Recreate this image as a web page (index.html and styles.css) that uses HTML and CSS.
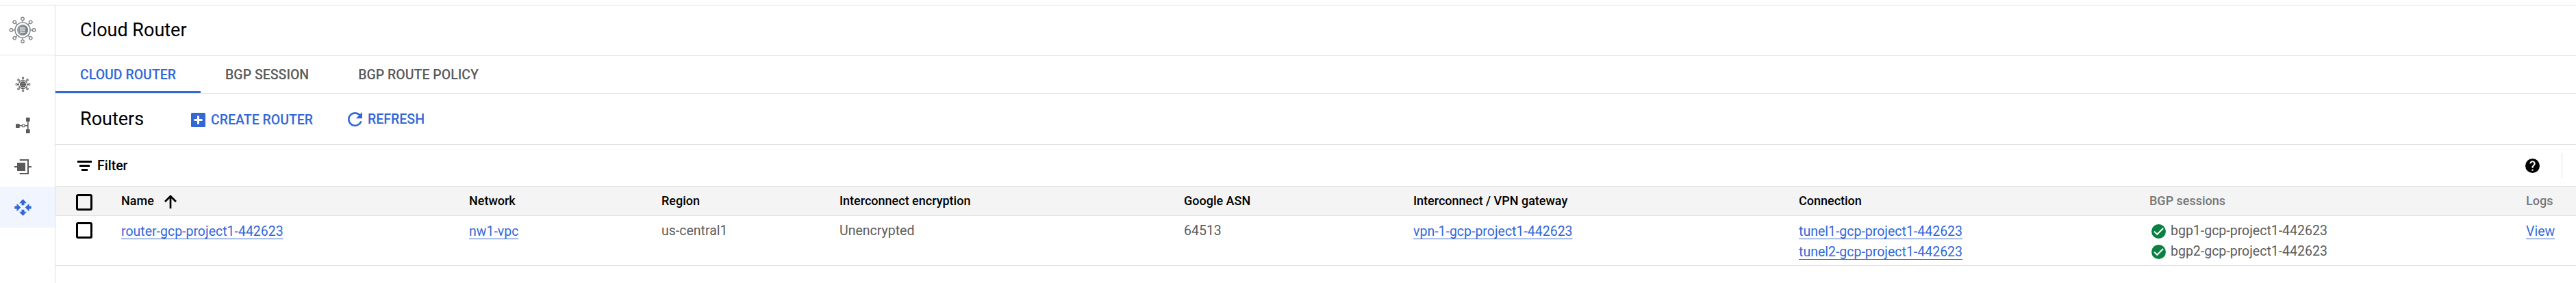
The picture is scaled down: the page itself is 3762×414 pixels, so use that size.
FILE: index.html
```html
<!DOCTYPE html>
<html lang="en">
<head>
<meta charset="utf-8">
<title>Cloud Router</title>
<link rel="stylesheet" href="styles.css">
</head>
<body>
<svg width="0" height="0" class="defs">
  <defs>
    <linearGradient id="disc" x1="0" y1="0" x2="1" y2="0"><stop offset="0" stop-color="#9aa0a6"/><stop offset="1" stop-color="#73797f"/></linearGradient>
    <g id="spoke"><path d="M0-11v-3" /><circle cx="0" cy="-16.600" r="2.200"/></g>
    <g id="hub">
      <circle r="11.100"/>
      <use href="#spoke"/><use href="#spoke" transform="rotate(45)"/><use href="#spoke" transform="rotate(90)"/><use href="#spoke" transform="rotate(135)"/>
      <use href="#spoke" transform="rotate(180)"/><use href="#spoke" transform="rotate(225)"/><use href="#spoke" transform="rotate(270)"/><use href="#spoke" transform="rotate(315)"/>
    </g>
  </defs>
</svg>
<div class="app">
  <nav class="rail">
    <div class="rail-top">
      <svg width="40" height="40" viewBox="-20 -20 40 40" fill="none">
        <use href="#hub" stroke="#80868b" stroke-width="1.400"/>
        <circle r="8" fill="url(#disc)"/>
        <path d="M-4-3h8M-4 0h8M-4 3.200h8" stroke="#e4e6e8" stroke-width="1.300"/>
      </svg>
    </div>
    <div class="rail-item">
      <svg class="odd" width="25" height="25" viewBox="-22.500 -22.500 45 45" fill="none">
        <use href="#hub" stroke="#5a5a5a" stroke-width="1.900"/>
        <circle r="8" fill="#5a5a5a"/>
        <path d="M-5-3h10M-5 2.500h10" stroke="#b5b5b5" stroke-width="1.400"/>
      </svg>
    </div>
    <div class="rail-item">
      <svg width="25" height="24" viewBox="0 0 25 24" fill="#5a5a5a">
        <path d="M2 9.300h5.700V15H2zM17 0h5.700v5.700H17zM17 17.300h5.700V23H17zM19 5h1.600v13H19zM7 11h4v1.400H7zM15 11h5v1.400h-5z"/>
        <circle cx="13.300" cy="11.700" r="2" fill="#fff" stroke="#5a5a5a" stroke-width="1.100"/>
      </svg>
    </div>
    <div class="rail-item">
      <svg width="25" height="24" viewBox="0 0 25 24" fill="#5a5a5a">
        <path d="M4 6h12v12H4zM0 11h4v2H0zM21 11h4v2h-4zM7.700 1H21v22H7.700v-2H19V3H7.700z"/>
      </svg>
    </div>
    <div class="rail-item active">
      <svg class="odd" width="25" height="25" viewBox="-12.500 -12.500 25 25" fill="#3367d6">
        <path d="M0-12.200 5.500-6.200H2v2.900h-4v-2.900h-3.500zM0 12.200 5.500 6.200H2V3.300h-4v2.900h-3.500zM-3.200 0-9-5.700V-2h-3.200v4H-9v3.700zM3.200 0 9-5.700V-2h3.200v4H9v3.700z"/>
      </svg>
    </div>
  </nav>
  <main class="main">
    <header class="title-bar"><h1 class="heading">Cloud Router</h1></header>
    <div class="tabs">
      <a class="tab selected">CLOUD ROUTER</a>
      <a class="tab">BGP SESSION</a>
      <a class="tab">BGP ROUTE POLICY</a>
    </div>
    <div class="toolbar">
      <h2 class="heading routers">Routers</h2>
      <button class="action create">
        <svg width="21" height="21" viewBox="0 0 21 21"><rect width="21" height="21" rx="1.500" fill="#3367d6"/><path d="M4.500 10.500h12M10.500 4.500v12" stroke="#fff" stroke-width="3"/></svg>
        <span>CREATE ROUTER</span>
      </button>
      <button class="action refresh">
        <svg width="21" height="21" viewBox="4 4 16 16" fill="#3367d6"><path d="M17.650 6.350A7.960 7.960 0 0 0 12 4a8 8 0 1 0 7.730 10h-2.080A6 6 0 1 1 12 6c1.660 0 3.140.69 4.220 1.780L13 11h7V4z"/></svg>
        <span>REFRESH</span>
      </button>
    </div>
    <div class="filter-bar">
      <svg class="filter-icon" width="21" height="15" viewBox="0 0 21 15"><path d="M0 0h21v3H0zM3 6h15v3H3zM6 12h9v3H6z"/></svg>
      <span class="filter-label">Filter</span>
      <svg class="help" width="21" height="21" viewBox="2 2 20 20"><path d="M12 2a10 10 0 1 0 0 20 10 10 0 0 0 0-20zm1 17h-2v-2h2zm2.070-7.750-.9.920C13.450 12.900 13 13.500 13 15h-2v-.5c0-1.100.45-2.100 1.170-2.830l1.240-1.260c.37-.36.59-.86.59-1.410a2 2 0 1 0-4 0H8a4 4 0 1 1 8 0c0 .88-.36 1.680-.93 2.250z"/></svg>
      <span class="divider"></span>
    </div>
    <div class="row head">
      <div><span class="checkbox"></span></div>
      <div class="name-head">Name
        <svg width="18" height="20" viewBox="0 0 18 20" fill="none" stroke="#000" stroke-width="2.700"><path d="M9 20V2M1 10l8-8 8 8"/></svg>
      </div>
      <div>Network</div>
      <div>Region</div>
      <div>Interconnect encryption</div>
      <div>Google ASN</div>
      <div>Interconnect / VPN gateway</div>
      <div>Connection</div>
      <div class="muted">BGP sessions</div>
      <div class="muted">Logs</div>
    </div>
    <div class="row body">
      <div><span class="checkbox"></span></div>
      <div class="links"><a>router-gcp-project1-442623</a></div>
      <div class="links"><a>nw1-vpc</a></div>
      <div>us-central1</div>
      <div>Unencrypted</div>
      <div>64513</div>
      <div class="links"><a>vpn-1-gcp-project1-442623</a></div>
      <div class="links"><a>tunel1-gcp-project1-442623</a><a>tunel2-gcp-project1-442623</a></div>
      <div>
        <div class="session"><svg width="21" height="21" viewBox="0 0 21 21"><circle cx="10.500" cy="10.500" r="10.500" fill="#0b8043"/><path d="M4 10.600l4.300 4.200 8.800-8.800" fill="none" stroke="#fff" stroke-width="2"/></svg>bgp1-gcp-project1-442623</div>
        <div class="session"><svg width="21" height="21" viewBox="0 0 21 21"><circle cx="10.500" cy="10.500" r="10.500" fill="#0b8043"/><path d="M4 10.600l4.300 4.200 8.800-8.800" fill="none" stroke="#fff" stroke-width="2"/></svg>bgp2-gcp-project1-442623</div>
      </div>
      <div class="links"><a>View</a></div>
    </div>
  </main>
</div>
</body>
</html>
```
FILE: styles.css
```css
* { box-sizing: border-box; }
body {
  margin: 0;
  background: #fff;
  font-family: Roboto, "Liberation Sans", sans-serif;
  font-size: 19.5px;
  color: #000;
}
svg { display: block; flex: none; }
.defs { position: absolute; }
.app {
  display: grid;
  grid-template-columns: 81px 1fr;
  height: 414px;
  padding-top: 7px;
  overflow: hidden;
}
.rail { border-top: 1px solid #e0e0e0; border-right: 1px solid #e0e0e0; }
.rail-top {
  height: 73px;
  padding: 16px 0 0 13px;
  border-bottom: 1px solid #e0e0e0;
}
.rail-item {
  display: flex;
  align-items: center;
  height: 60px;
  padding-left: 21px;
}
.rail-item svg { margin-top: 2px; }
.rail-item svg.odd { margin-top: 1px; }
.rail-top + .rail-item { margin-top: 12px; }
.rail-item.active { background: #f0f5ff; }
.main { border-top: 1px solid #e0e0e0; min-width: 0; }
.title-bar {
  height: 74px;
  padding-left: 36px;
  border-bottom: 1px solid #e0e0e0;
}
.heading { margin: 0; font-size: 27px; font-weight: 400; line-height: 72px; }
.tabs { display: flex; height: 55px; border-bottom: 1px solid #e0e0e0; }
.tab {
  height: 54px;
  padding: 0 36px;
  line-height: 55px;
  font-weight: 500;
  color: #5a5a5a;
}
.tab.selected { color: #3367d6; box-shadow: inset 0 -3px #3367d6; }
.toolbar {
  display: flex;
  height: 75px;
  padding-left: 36px;
  border-bottom: 1px solid #e0e0e0;
}
.routers { width: 162px; line-height: 74px; }
.action {
  display: flex;
  align-items: center;
  gap: 8px;
  height: 23px;
  padding: 0;
  border: 0;
  background: none;
  font: 500 19.5px/23px Roboto, "Liberation Sans", sans-serif;
  color: #3367d6;
}
.create { width: 229px; margin-top: 27px; }
.refresh { margin-top: 26px; }
.filter-bar {
  display: flex;
  align-items: center;
  height: 61px;
  padding: 0 20px 0 32px;
  border-bottom: 1px solid #e0e0e0;
}
.filter-icon { margin-top: 1px; }
.filter-label { margin: 1px 0 0 8px; font-weight: 500; line-height: 23px; }
.help { margin: 1px 0 0 auto; }
.divider { width: 1px; height: 36px; margin-left: 32px; background: #e0e0e0; }
.row {
  display: grid;
  grid-template-columns: 66px 508px 281px 260px 503px 335px 563px 512px 550px 1fr;
  padding-left: 30px;
  border-bottom: 1px solid #e0e0e0;
}
.head {
  height: 43px;
  background: #f4f4f4;
  font-size: 18px;
  font-weight: 500;
  line-height: 41px;
}
.head .checkbox { margin-top: 11px; }
.name-head { display: flex; gap: 15px; }
.name-head svg { margin-top: 12px; }
.muted { color: #757575; }
.body {
  height: 73px;
  padding-top: 6.5px;
  line-height: 30px;
  color: #5c5c5c;
}
.body .checkbox { margin-top: 2.5px; }
.checkbox {
  display: block;
  width: 24px;
  height: 24px;
  border: 3px solid #000;
  border-radius: 3px;
}
.links { padding-top: 1px; }
.links a {
  display: block;
  color: #3367d6;
  text-decoration: underline 1px;
  text-underline-offset: 4px;
  text-decoration-skip-ink: none;
}
.session { display: flex; align-items: center; gap: 7px; padding-left: 3px; }
.session svg { margin-top: 2px; }
```
